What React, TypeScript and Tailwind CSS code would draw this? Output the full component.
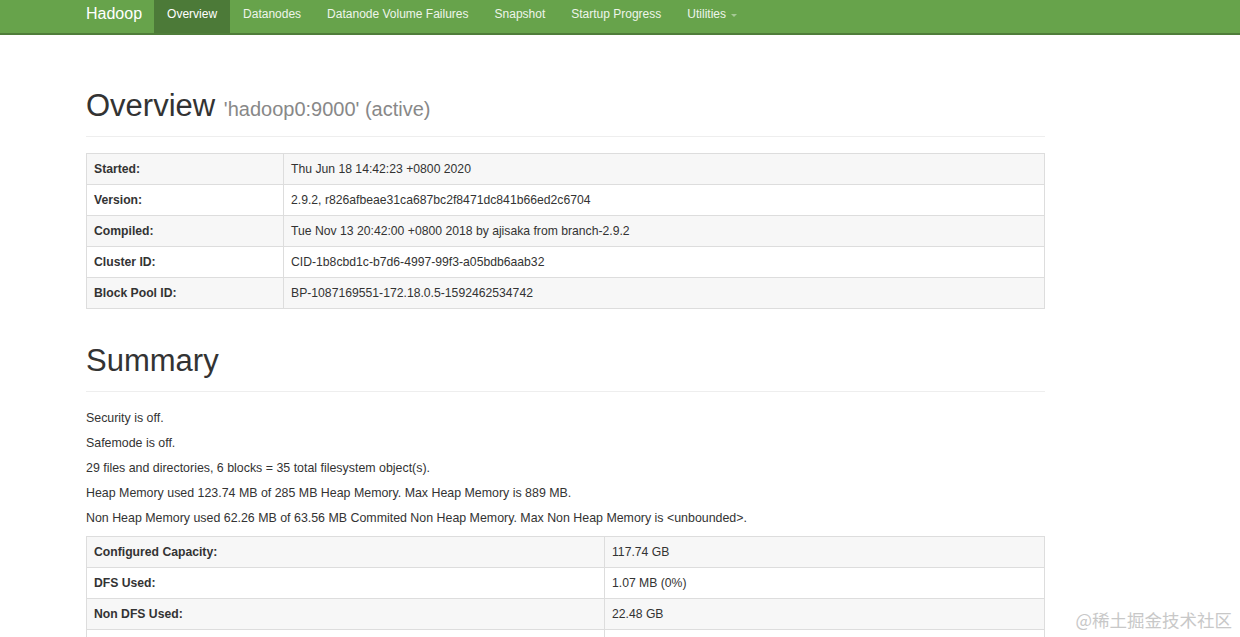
import React from 'react'

const navItems = ['Overview', 'Datanodes', 'Datanode Volume Failures', 'Snapshot', 'Startup Progress']

const overviewRows = [
  ['Started:', 'Thu Jun 18 14:42:23 +0800 2020'],
  ['Version:', '2.9.2, r826afbeae31ca687bc2f8471dc841b66ed2c6704'],
  ['Compiled:', 'Tue Nov 13 20:42:00 +0800 2018 by ajisaka from branch-2.9.2'],
  ['Cluster ID:', 'CID-1b8cbd1c-b7d6-4997-99f3-a05bdb6aab32'],
  ['Block Pool ID:', 'BP-1087169551-172.18.0.5-1592462534742'],
]

const summaryLines = [
  'Security is off.',
  'Safemode is off.',
  '29 files and directories, 6 blocks = 35 total filesystem object(s).',
  'Heap Memory used 123.74 MB of 285 MB Heap Memory. Max Heap Memory is 889 MB.',
  'Non Heap Memory used 62.26 MB of 63.56 MB Commited Non Heap Memory. Max Non Heap Memory is <unbounded>.',
]

const capacityRows = [
  ['Configured Capacity:', '117.74 GB'],
  ['DFS Used:', '1.07 MB (0%)'],
  ['Non DFS Used:', '22.48 GB'],
  ['DFS Remaining:', '89.29 GB (75.84%)'],
]

function InfoTable({ rows, labelWidth }: { rows: string[][]; labelWidth: string }) {
  return (
    <table className="w-full border-collapse border border-[#dddddd] text-[12.2px] text-[#333]">
      <tbody>
        {rows.map(([label, value], i) => (
          <tr key={label} className={i % 2 === 0 ? 'bg-[#f7f7f7]' : 'bg-white'}>
            <th className={`${labelWidth} h-[31px] border border-[#dddddd] px-[7px] text-left font-bold`}>{label}</th>
            <td className="h-[31px] border border-[#dddddd] px-[7px]">{value}</td>
          </tr>
        ))}
      </tbody>
    </table>
  )
}

export default function App() {
  return (
    <div className="relative h-[637px] overflow-hidden bg-white font-['Liberation_Sans',Arial,sans-serif]">
      {/* Navbar */}
      <header className="h-[35px] border-b-2 border-[#4f7d3a] bg-[#67a34b]">
        <div className="ml-[86px] flex h-full items-stretch">
          <span className="flex items-center pb-[5px] pr-[12px] text-[16px] text-white">Hadoop</span>
          <nav className="flex items-stretch text-[12px] text-[#eef5ea]">
            {navItems.map((item) => (
              <span
                key={item}
                className={
                  item === 'Overview'
                    ? 'flex items-center bg-[#4c7a38] px-[13px] pb-[5px] text-white'
                    : 'flex items-center px-[13px] pb-[5px]'
                }
              >
                {item}
              </span>
            ))}
            <span className="flex items-center gap-[5px] px-[13px] pb-[5px]">
              Utilities
              <span className="mt-[2px] h-0 w-0 border-x-[3px] border-t-[3px] border-x-transparent border-t-[#a6c996]" />
            </span>
          </nav>
        </div>
      </header>

      <main className="ml-[86px] w-[959px] text-[#333]">
        {/* Overview header */}
        <div className="mt-[51px] border-b border-[#eeeeee] pb-[7px]">
          <h1 className="text-[31px] leading-[40px]">
            Overview{' '}
            <small className="text-[20px] text-[#888]">'hadoop0:9000' (active)</small>
          </h1>
        </div>

        <div className="mt-[16px]">
          <InfoTable rows={overviewRows} labelWidth="w-[197px]" />
        </div>

        {/* Summary header */}
        <div className="mt-[32px] border-b border-[#eeeeee] pb-[10px]">
          <h1 className="text-[31px] leading-[40px]">Summary</h1>
        </div>

        <div className="mt-[18px] flex flex-col gap-[9px] text-[12.4px] leading-[16px]">
          {summaryLines.map((line) => (
            <p key={line}>{line}</p>
          ))}
        </div>

        <div className="mt-[10px]">
          <InfoTable rows={capacityRows} labelWidth="w-[518px]" />
        </div>
      </main>

      {/* Watermark */}
      <div className="absolute bottom-[4px] right-[8px] font-['Noto_Sans_CJK_SC',sans-serif] text-[17.5px] text-[#c8c8c8]">
        @稀土掘金技术社区
      </div>
    </div>
  )
}
